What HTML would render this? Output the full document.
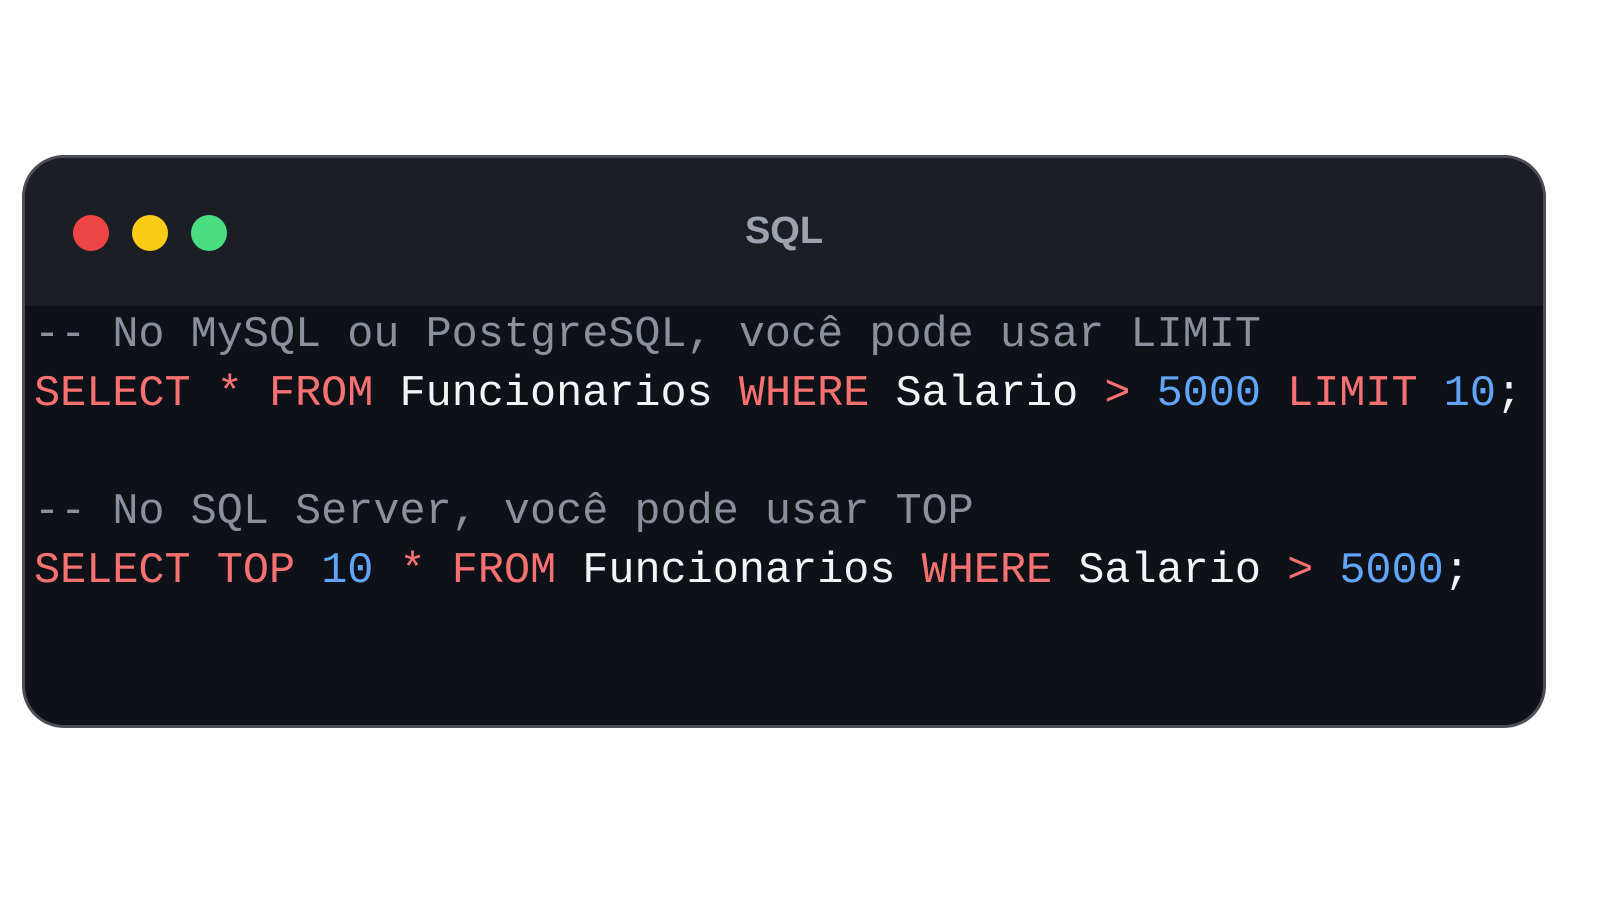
<!DOCTYPE html>
<html><head><style>
html,body{margin:0;padding:0;background:#fff;width:1599px;height:900px;overflow:hidden}
.win{position:absolute;left:22px;top:155px;width:1518px;height:567px;border:3px solid #4b4e56;border-radius:42px;background:#0e1118;overflow:hidden}
.bar{position:absolute;left:0;top:0;right:0;height:148px;background:#1c1e25}
.dot{position:absolute;top:57px;width:36px;height:36px;border-radius:50%}
.title{position:absolute;left:0;right:0;top:52px;text-align:center;color:#9ca3af;font:bold 38px "Liberation Sans",sans-serif}
pre{position:absolute;left:9px;top:148px;margin:0;font-family:"Liberation Mono","DejaVu Sans Mono",monospace;font-size:43.5px;line-height:59px;color:#f3f4f6}
.c{color:#8b919c}.k{color:#f87171}.n{color:#60a5fa}
</style></head><body>
<div class="win">
<div class="bar">
<div class="dot" style="left:48px;background:#ef4444"></div>
<div class="dot" style="left:107px;background:#facc15"></div>
<div class="dot" style="left:166px;background:#4ade80"></div>
<div class="title">SQL</div>
</div>
<pre><span class="c">-- No MySQL ou PostgreSQL, você pode usar LIMIT</span>
<span class="k">SELECT</span> <span class="k">*</span> <span class="k">FROM</span> Funcionarios <span class="k">WHERE</span> Salario <span class="k">&gt;</span> <span class="n">5000</span> <span class="k">LIMIT</span> <span class="n">10</span>;

<span class="c">-- No SQL Server, você pode usar TOP</span>
<span class="k">SELECT</span> <span class="k">TOP</span> <span class="n">10</span> <span class="k">*</span> <span class="k">FROM</span> Funcionarios <span class="k">WHERE</span> Salario <span class="k">&gt;</span> <span class="n">5000</span>;</pre>
</div>
</body></html>
